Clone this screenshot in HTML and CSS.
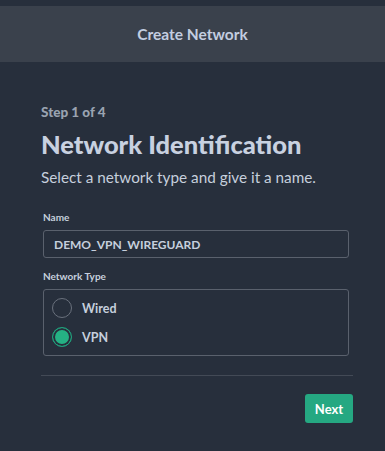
FILE: index.html
```html
<!DOCTYPE html>
<html>
<head>
  <title>Create Network</title>
  <link rel="stylesheet" href="styles.css">
</head>
<body>
  <div class="header">
    <h2 class="header-title">Create Network</h2>
  </div>

  <div class="wizard">
    <div class="step">Step 1 of 4</div>
    <h1 class="wizard-title">Network Identification</h1>
    <p class="wizard-text">Select a network type and give it a name.</p>

    <form class="wizard-form">
      <label for="networkName" class="field-label">Name</label>
      <input type="text" id="networkName" class="field-input" value="DEMO_VPN_WIREGUARD">

      <div class="field-label">Network Type</div>
      <div class="radio-group">
        <label class="radio-option">
          <span class="radio"></span>
          Wired
        </label>
        <label class="radio-option">
          <span class="radio radio-checked"></span>
          VPN
        </label>
      </div>
    </form>

    <div class="footer">
      <button type="button" class="next-button">Next</button>
    </div>
  </div>
</body>
</html>
```

FILE: styles.css
```css
/* Create network wizard */
body {
  font-family: Lato, "Open Sans", sans-serif;
  background-color: #272f3c;
  color: #c6cfdd;
  margin: 0;
  padding: 6px 0 0 0;
}

.header {
  background-color: #3a414c;
  height: 56px;
  display: flex;
  justify-content: center;
  align-items: center;
}

.header-title {
  margin: 0;
  font-size: 15.5px;
  font-weight: bold;
  color: #c3cde0;
}

.wizard {
  padding: 40px 32px 0 41px;
}

.step {
  font-size: 13.5px;
  font-weight: 900;
  color: #9aa3b1;
  line-height: 20px;
}

.wizard-title {
  margin: 6px 0 0 0;
  font-size: 25.5px;
  line-height: 32px;
  font-weight: 900;
  color: #c8d1e0;
}

.wizard-text {
  margin: 6px 0 0 0;
  font-size: 15.3px;
  line-height: 22px;
}

.wizard-form {
  display: flex;
  flex-direction: column;
  padding: 0 4px 0 2px;
  margin-top: 11px;
}

.field-label {
  font-size: 10px;
  font-weight: bold;
  line-height: 14px;
  margin: 11px 0 6px 0;
}

.field-input {
  height: 28px;
  box-sizing: border-box;
  background: transparent;
  border: 1px solid #5a616d;
  border-radius: 3px;
  padding: 0 10px;
  font-family: inherit;
  font-size: 12px;
  font-weight: bold;
  color: #c6cfdd;
}

.radio-group {
  border: 1px solid #5a616d;
  border-radius: 3px;
  padding: 8px;
  display: flex;
  flex-direction: column;
  gap: 9px;
}

.radio-option {
  display: flex;
  align-items: center;
  gap: 10px;
  font-size: 12.5px;
  font-weight: bold;
}

.radio {
  width: 20px;
  height: 20px;
  box-sizing: border-box;
  border: 1px solid #6a717d;
  border-radius: 50%;
}

.radio-checked {
  border: 1px solid #20a07c;
  background-color: #25b184;
  box-shadow: inset 0 0 0 2px #272f3c;
}

.footer {
  margin-top: 19px;
  border-top: 1px solid #434a56;
  padding-top: 18px;
  display: flex;
  justify-content: flex-end;
}

.next-button {
  width: 48px;
  height: 29px;
  background-color: #25a882;
  color: #ffffff;
  border: none;
  border-radius: 3px;
  font-family: inherit;
  font-size: 13px;
  font-weight: bold;
  cursor: pointer;
}
```
